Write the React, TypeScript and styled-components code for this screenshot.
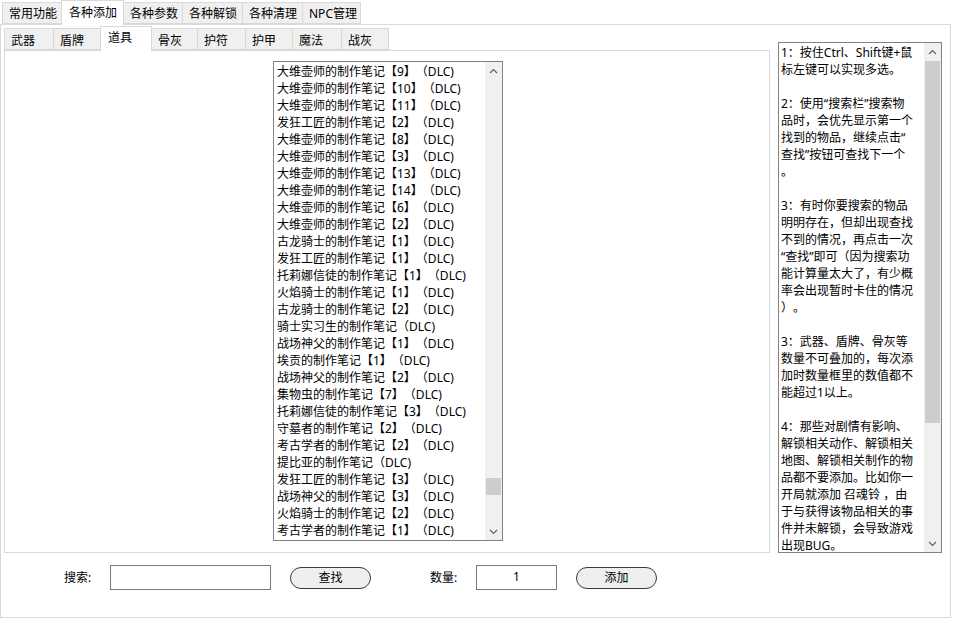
import React from "react";
import styled, { createGlobalStyle } from "styled-components";

const Global = createGlobalStyle`
  html, body { margin: 0; padding: 0; background: #fff; }
  body {
    font-family: "Noto Sans", "Noto Sans CJK SC", sans-serif;
    font-size: 12px;
    color: #000;
    text-spacing-trim: space-all;
  }
  * { box-sizing: border-box; }
`;

const Window = styled.div`
  width: 953px;
  height: 619px;
  display: flex;
  flex-direction: column;
  overflow: hidden;
  background: #fff;
`;

const TabStrip = styled.div<{ $left: number }>`
  display: flex;
  align-items: flex-end;
  height: 24px;
  padding-left: ${(p) => p.$left}px;
  position: relative;
  z-index: 1;
  flex-shrink: 0;
`;

const Tab = styled.div<{ $w: number; $active?: boolean; $pt: number }>`
  width: ${(p) => p.$w}px;
  height: ${(p) => (p.$active ? 25 : 22)}px;
  margin-bottom: ${(p) => (p.$active ? -1 : 0)}px;
  margin-left: -1px;
  &:first-child { margin-left: 0; }
  border: 1px solid #d9d9d9;
  border-bottom: ${(p) => (p.$active ? "none" : "1px solid #d9d9d9")};
  background: ${(p) => (p.$active ? "#ffffff" : "#f0f0f0")};
  position: relative;
  z-index: ${(p) => (p.$active ? 2 : 1)};
  padding: ${(p) => p.$pt}px 0 0 ${(p) => (p.$active ? 7 : 6)}px;
  line-height: 16px;
  white-space: nowrap;
  font-size: 12px;
`;

const OuterPanel = styled.div`
  width: 951px;
  height: 594px;
  border: 1px solid #d9d9d9;
  background: #fff;
  display: flex;
  flex-direction: column;
  flex-shrink: 0;
`;

const MainRow = styled.div`
  display: flex;
  margin-top: 1px;
  padding-left: 3px;
  height: 527px;
`;

const LeftCol = styled.div`
  width: 766px;
  display: flex;
  flex-direction: column;
`;

const InnerPanel = styled.div`
  height: 503px;
  border: 1px solid #d9d9d9;
  background: #fff;
  padding: 10px 0 0 268px;
  display: flex;
  align-items: flex-start;
`;

const ListBox = styled.div`
  width: 230px;
  height: 480px;
  border: 1px solid #828282;
  display: flex;
  background: #fff;
`;

const ListItems = styled.div`
  flex: 1;
  overflow: hidden;
  padding: 1px 0 0 3px;
`;

const ListRow = styled.div`
  height: 17px;
  line-height: 17px;
  white-space: nowrap;
`;

const ScrollBar = styled.div`
  width: 17px;
  flex-shrink: 0;
  background: #f0f0f0;
  display: flex;
  flex-direction: column;
`;

const ArrowBtn = styled.div`
  height: 17px;
  display: flex;
  align-items: center;
  justify-content: center;
  flex-shrink: 0;
`;

const Track = styled.div`
  flex: 1;
  position: relative;
`;

const Thumb = styled.div<{ $top: number; $h: number }>`
  position: absolute;
  left: 1px;
  right: 1px;
  top: ${(p) => p.$top}px;
  height: ${(p) => p.$h}px;
  background: #cdcdcd;
`;

const HelpBox = styled.div`
  width: 164px;
  height: 511px;
  margin: 16px 0 0 8px;
  border: 1px solid #828282;
  display: flex;
  background: #fff;
`;

const HelpText = styled.div`
  flex: 1;
  overflow: hidden;
  padding: 1px 0 0 2px;
`;

const HelpLine = styled.div`
  height: 17px;
  line-height: 17px;
  white-space: nowrap;
`;

const ControlRow = styled.div`
  display: flex;
  align-items: flex-start;
  height: 64px;
  padding: 12px 0 0 63px;
`;

const Label = styled.div`
  width: 46px;
  height: 25px;
  line-height: 25px;
  white-space: nowrap;
`;

const Field = styled.div<{ $w: number; $center?: boolean }>`
  width: ${(p) => p.$w}px;
  height: 25px;
  border: 1px solid #7a7a7a;
  background: #fff;
  line-height: 22px;
  text-align: ${(p) => (p.$center ? "center" : "left")};
  padding: 0 2px;
`;

const PillButton = styled.div<{ $ml: number }>`
  width: 81px;
  height: 22px;
  margin: 2px 0 0 ${(p) => p.$ml}px;
  border: 1px solid #3a3a3a;
  border-radius: 11px;
  background: #efefef;
  display: flex;
  align-items: center;
  justify-content: center;
  line-height: 20px;
`;

const Spacer = styled.div<{ $w: number }>`
  width: ${(p) => p.$w}px;
  flex-shrink: 0;
`;

const Chevron = ({ up }: { up?: boolean }) => (
  <svg width="9" height="6" viewBox="0 0 9 6">
    <polyline
      points={up ? "1,5 4.5,1.5 8,5" : "1,1 4.5,4.5 8,1"}
      fill="none"
      stroke="#606060"
      strokeWidth="1.2"
    />
  </svg>
);

const Scroll = ({ top, h }: { top: number; h: number }) => (
  <ScrollBar>
    <ArrowBtn>
      <Chevron up />
    </ArrowBtn>
    <Track>
      <Thumb $top={top} $h={h} />
    </Track>
    <ArrowBtn>
      <Chevron />
    </ArrowBtn>
  </ScrollBar>
);

const outerTabs = [
  { t: "常用功能", w: 60 },
  { t: "各种添加", w: 63, a: true },
  { t: "各种参数", w: 60 },
  { t: "各种解锁", w: 61 },
  { t: "各种清理", w: 61 },
  { t: "NPC管理", w: 59 },
];

const innerTabs = [
  { t: "武器", w: 50 },
  { t: "盾牌", w: 48 },
  { t: "道具", w: 52, a: true },
  { t: "骨灰", w: 47 },
  { t: "护符", w: 49 },
  { t: "护甲", w: 48 },
  { t: "魔法", w: 50 },
  { t: "战灰", w: 48 },
];

const items = [
  "大维壶师的制作笔记【9】（DLC)",
  "大维壶师的制作笔记【10】（DLC)",
  "大维壶师的制作笔记【11】（DLC)",
  "发狂工匠的制作笔记【2】（DLC)",
  "大维壶师的制作笔记【8】（DLC)",
  "大维壶师的制作笔记【3】（DLC)",
  "大维壶师的制作笔记【13】（DLC)",
  "大维壶师的制作笔记【14】（DLC)",
  "大维壶师的制作笔记【6】（DLC)",
  "大维壶师的制作笔记【2】（DLC)",
  "古龙骑士的制作笔记【1】（DLC)",
  "发狂工匠的制作笔记【1】（DLC)",
  "托莉娜信徒的制作笔记【1】（DLC)",
  "火焰骑士的制作笔记【1】（DLC)",
  "古龙骑士的制作笔记【2】（DLC)",
  "骑士实习生的制作笔记（DLC)",
  "战场神父的制作笔记【1】（DLC)",
  "埃贡的制作笔记【1】（DLC)",
  "战场神父的制作笔记【2】（DLC)",
  "集物虫的制作笔记【7】（DLC)",
  "托莉娜信徒的制作笔记【3】（DLC)",
  "守墓者的制作笔记【2】（DLC)",
  "考古学者的制作笔记【2】（DLC)",
  "提比亚的制作笔记（DLC)",
  "发狂工匠的制作笔记【3】（DLC)",
  "战场神父的制作笔记【3】（DLC)",
  "火焰骑士的制作笔记【2】（DLC)",
  "考古学者的制作笔记【1】（DLC)",
];

const help = [
  "1：按住Ctrl、Shift键+鼠",
  "标左键可以实现多选。",
  "",
  "2：使用“搜索栏”搜索物",
  "品时，会优先显示第一个",
  "找到的物品，继续点击“",
  "查找”按钮可查找下一个",
  "。",
  "",
  "3：有时你要搜索的物品",
  "明明存在，但却出现查找",
  "不到的情况，再点击一次",
  "“查找”即可（因为搜索功",
  "能计算量太大了，有少概",
  "率会出现暂时卡住的情况",
  "）。",
  "",
  "3：武器、盾牌、骨灰等",
  "数量不可叠加的，每次添",
  "加时数量框里的数值都不",
  "能超过1以上。",
  "",
  "4：那些对剧情有影响、",
  "解锁相关动作、解锁相关",
  "地图、解锁相关制作的物",
  "品都不要添加。比如你一",
  "开局就添加 召魂铃 ，由",
  "于与获得该物品相关的事",
  "件并未解锁，会导致游戏",
  "出现BUG。",
];

export default function App() {
  return (
    <Window>
      <Global />
      <TabStrip $left={2}>
        {outerTabs.map((t) => (
          <Tab key={t.t} $w={t.w} $active={t.a} $pt={t.a ? 4 : 3}>
            {t.t}
          </Tab>
        ))}
      </TabStrip>
      <OuterPanel>
        <MainRow>
          <LeftCol>
            <TabStrip $left={0}>
              {innerTabs.map((t) => (
                <Tab key={t.t} $w={t.w} $active={t.a} $pt={t.a ? 3 : 4}>
                  {t.t}
                </Tab>
              ))}
            </TabStrip>
            <InnerPanel>
              <ListBox>
                <ListItems>
                  {items.map((s, i) => (
                    <ListRow key={i}>{s}</ListRow>
                  ))}
                </ListItems>
                <Scroll top={399} h={17} />
              </ListBox>
            </InnerPanel>
          </LeftCol>
          <HelpBox>
            <HelpText>
              {help.map((s, i) => (
                <HelpLine key={i}>{s}</HelpLine>
              ))}
            </HelpText>
            <Scroll top={1} h={362} />
          </HelpBox>
        </MainRow>
        <ControlRow>
          <Label>搜索:</Label>
          <Field $w={161} />
          <PillButton $ml={19}>查找</PillButton>
          <Spacer $w={59} />
          <Label>数量:</Label>
          <Field $w={81} $center>
            1
          </Field>
          <PillButton $ml={19}>添加</PillButton>
        </ControlRow>
      </OuterPanel>
    </Window>
  );
}
